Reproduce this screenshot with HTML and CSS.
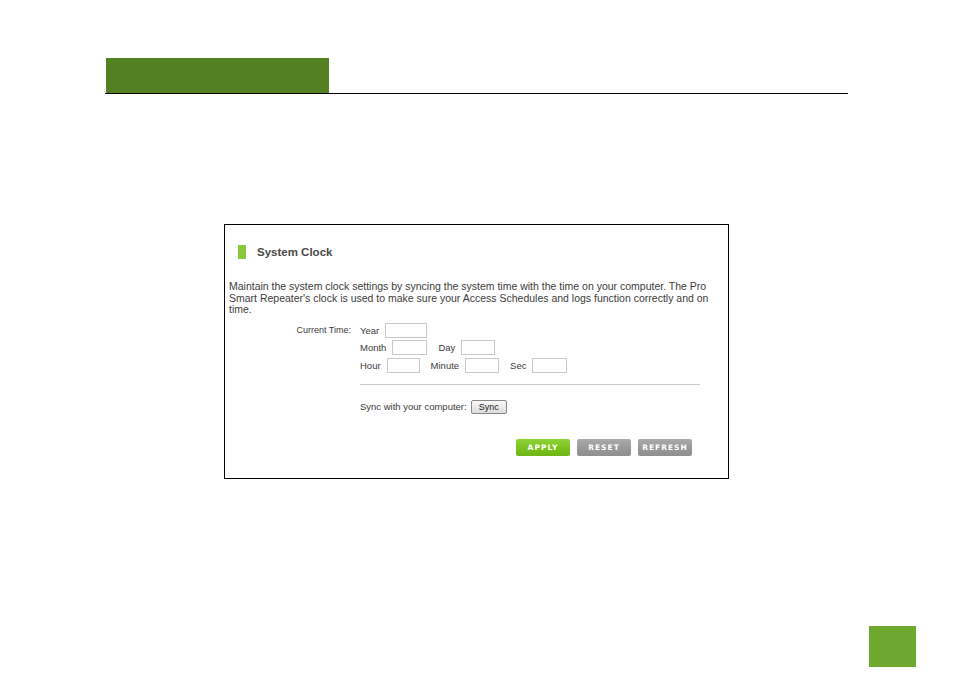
FILE: index.html
```html
<!DOCTYPE html>
<html lang="en">
<head>
    <meta charset="UTF-8">
    <title>System Clock</title>
    <link rel="stylesheet" href="styles.css">
</head>
<body>
    <div class="page">
        <!-- Section heading tab -->
        <div class="header">
            <div class="tab"></div>
        </div>

        <!-- Screenshot of the settings panel -->
        <div class="shot">
            <h2 class="panel-title"><span class="marker"></span>System Clock</h2>
            <p class="desc">Maintain the system clock settings by syncing the system time with the time on your computer. The Pro Smart Repeater's clock is used to make sure your Access Schedules and logs function correctly and on time.</p>

            <div class="time-form">
                <div class="time-label">Current Time:</div>
                <div class="fields">
                    <div class="row">
                        <span>Year</span><input type="text" class="in-year">
                    </div>
                    <div class="row">
                        <span>Month</span><input type="text" class="in-month">
                        <span class="next">Day</span><input type="text" class="in-day">
                    </div>
                    <div class="row">
                        <span>Hour</span><input type="text" class="in-hour">
                        <span class="next">Minute</span><input type="text" class="in-min">
                        <span class="next">Sec</span><input type="text" class="in-sec">
                    </div>
                    <div class="sep"></div>
                    <div class="sync-row">
                        <span>Sync with your computer:</span>
                        <button type="button" class="sync-btn">Sync</button>
                    </div>
                </div>
            </div>

            <div class="actions">
                <button type="button" class="act apply">APPLY</button>
                <button type="button" class="act gray">RESET</button>
                <button type="button" class="act gray">REFRESH</button>
            </div>
        </div>

        <!-- Page number box -->
        <div class="page-num"></div>
    </div>
</body>
</html>
```

FILE: styles.css
```css
body {
    margin: 0;
    padding: 0;
    background: #fff;
    font-family: Arial, "Liberation Sans", sans-serif;
}
.page {
    display: flex;
    flex-direction: column;
    min-height: 673px;
    box-sizing: border-box;
    padding-top: 58px;
}
.header {
    margin: 0 107px 0 105px;
    border-bottom: 1px solid #000;
}
.tab {
    width: 223px;
    height: 35px;
    margin-left: 1px;
    background: #538022;
}
.shot {
    width: 505px;
    box-sizing: border-box;
    margin: 130px 0 0 224px;
    border: 1px solid #000;
    padding: 20px 4px 22px 4px;
    color: #3c3c3c;
    font-size: 10.5px;
}
.panel-title {
    display: flex;
    align-items: center;
    margin: 0 0 0 9px;
    font-size: 11.5px;
    font-weight: bold;
    color: #4a4a4a;
    height: 14px;
}
.marker {
    width: 8px;
    height: 14px;
    background: #8cc63f;
    margin-right: 11px;
}
.desc {
    margin: 22px 0 7px;
    line-height: 11.6px;
}
.time-form {
    display: flex;
    font-size: 9.5px;
}
.time-label {
    width: 122px;
    text-align: right;
    line-height: 15px;
    font-size: 9px;
}
.fields {
    margin-left: 9px;
    width: 340px;
}
.row {
    display: flex;
    align-items: center;
    height: 15px;
    margin-bottom: 2.5px;
}
.row input {
    height: 15px;
    box-sizing: border-box;
    border: 1px solid #c8c8c8;
    padding: 0;
    margin-left: 6px;
}
.row .next {
    margin-left: 11px;
}
.in-year { width: 42px; }
.in-month { width: 35px; }
.in-day { width: 34px; }
.in-hour { width: 33px; }
.in-min { width: 34px; }
.in-sec { width: 35px; }
.sep {
    height: 1px;
    background: #ccc;
    margin: 11px 0 15px;
}
.sync-row {
    display: flex;
    align-items: center;
}
.sync-btn {
    margin-left: 4px;
    width: 36px;
    height: 14px;
    padding: 0;
    font-family: Arial, "Liberation Sans", sans-serif;
    font-size: 9px;
    color: #222;
    border: 1px solid #888;
    border-radius: 2px;
    background: linear-gradient(#f8f8f8, #dcdcdc);
}
.actions {
    display: flex;
    gap: 7px;
    margin: 25px 0 0 287px;
}
.act {
    width: 54px;
    height: 17px;
    padding: 0;
    border: none;
    border-radius: 2px;
    color: #fff;
    font-family: "DejaVu Sans", Verdana, sans-serif;
    font-size: 7.5px;
    font-weight: bold;
    letter-spacing: 1px;
}
.apply {
    background: linear-gradient(#8fd33a 0%, #7cc31f 50%, #6fb515 100%);
}
.gray {
    background: linear-gradient(#aaa 0%, #9a9a9a 50%, #8f8f8f 100%);
}
.page-num {
    align-self: flex-end;
    width: 47px;
    height: 41px;
    margin: auto 39px 6px 0;
    background: #6fa82f;
}
```
